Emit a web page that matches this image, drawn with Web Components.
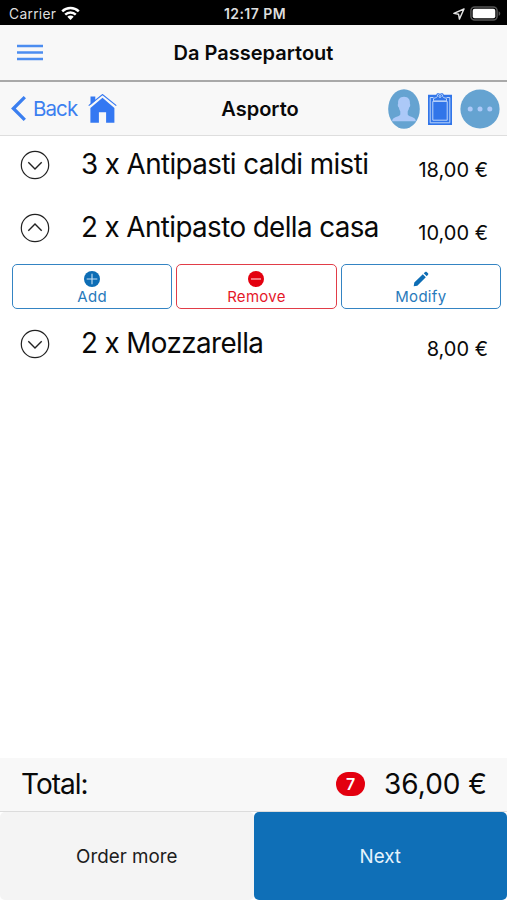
<!DOCTYPE html>
<html lang="en">
<head>
<meta charset="utf-8">
<title>Asporto</title>
<style>
  body {
    margin: 0;
    background: #fff;
    color: #090909;
    font-family: Inter, "Liberation Sans", sans-serif;
  }
</style>
</head>
<body>
<order-app>
  <status-bar slot="top" carrier="Carrier" time="12:17 PM"></status-bar>
  <app-header slot="top">Da Passepartout</app-header>
  <nav-toolbar slot="top" back="Back">Asporto</nav-toolbar>

  <order-row price="18,00 €">3 x Antipasti caldi misti</order-row>
  <order-row price="10,00 €" open>2 x Antipasto della casa</order-row>
  <order-row price="8,00 €">2 x Mozzarella</order-row>

  <order-total slot="bottom" count="7" amount="36,00 €">Total:</order-total>
  <order-footer slot="bottom"></order-footer>
</order-app>

<script>
const baseStyle = `
  :host, * { box-sizing: border-box; }
  svg { display: block; flex: none; }
  span, h1, h2 { white-space: nowrap; margin: 0; }
`

class BaseElement extends HTMLElement {
  connectedCallback() {
    if (this.shadowRoot) return
    const template = document.createElement('template')
    template.innerHTML = `<style>${baseStyle}${this.css()}</style>${this.html()}`
    this.attachShadow({ mode: 'open' }).append(template.content.cloneNode(true))
  }
}

customElements.define('order-app', class extends BaseElement {
  css() {
    return `
      :host { display: flex; flex-direction: column; width: 507px; height: 900px; overflow: hidden; }
      main { flex: 1; min-height: 0; }
    `
  }
  html() {
    return `<slot name="top"></slot><main><slot></slot></main><slot name="bottom"></slot>`
  }
})

customElements.define('status-bar', class extends BaseElement {
  css() {
    return `
      :host {
        display: grid;
        grid-template-columns: 1fr auto 1fr;
        align-items: center;
        height: 25px;
        padding: 2px 6px 0 9px;
        background: #000;
        color: #dedede;
        font-size: 13.8px;
        line-height: 20px;
      }
      div { display: flex; align-items: center; gap: 5px; }
      .carrier { letter-spacing: .3px; }
      .time { font-weight: 600; font-size: 14px; letter-spacing: .45px; }
      .right { justify-content: flex-end; gap: 5px; }
    `
  }
  html() {
    return `
      <div>
        <span class="carrier">${this.getAttribute('carrier')}</span>
        <svg width="19" height="15" viewBox="0 0 19 15" fill="none" stroke="#fff" stroke-width="2.5">
          <path d="M1.2 5.3a12 12 0 0 1 16.6 0M4.2 8.7a7.6 7.6 0 0 1 10.6 0"/>
          <path d="M6.3 10.7a4.6 4.6 0 0 1 6.4 0L9.5 14z" fill="#fff" stroke="none"/>
        </svg>
      </div>
      <span class="time">${this.getAttribute('time')}</span>
      <div class="right">
        <svg width="12" height="12" viewBox="0 0 12 12" fill="none" stroke="#e4e4e4" stroke-width="1.4" stroke-linejoin="round">
          <path d="M11 1 .9 5.4l4.7.9.8 4.8z"/>
        </svg>
        <svg width="31" height="15" viewBox="0 0 31 15">
          <rect x=".9" y=".9" width="26.2" height="13.2" rx="3.8" fill="#000" stroke="#555" stroke-width="1.5"/>
          <rect x="2.7" y="2.7" width="22.6" height="9.6" rx="2" fill="#fff"/>
          <path d="M28.6 5.2c2.2.8 2.2 3.8 0 4.6z" fill="#555"/>
        </svg>
      </div>
    `
  }
})

customElements.define('app-header', class extends BaseElement {
  css() {
    return `
      :host {
        display: grid;
        grid-template-columns: 1fr auto 1fr;
        align-items: center;
        height: 57px;
        padding: 0 17px;
        background: #f8f8f8;
        border-bottom: 2px solid #a9a9a9;
      }
      h1 { font-size: 20px; font-weight: 600; line-height: 28px; }
    `
  }
  html() {
    return `
      <svg width="26" height="17" viewBox="0 0 26 17" stroke="#4c8df0" stroke-width="2.3">
        <path d="M0 2h26M0 8.5h26M0 15h26"/>
      </svg>
      <h1><slot></slot></h1>
    `
  }
})

customElements.define('nav-toolbar', class extends BaseElement {
  css() {
    return `
      :host {
        display: grid;
        grid-template-columns: 1fr auto 1fr;
        align-items: center;
        height: 54px;
        padding: 0 7px 0 11px;
        background: #f8f8f8;
        border-bottom: 1px solid #dedede;
      }
      div { display: flex; align-items: center; }
      .back { color: #3b7ff0; font-size: 20.5px; line-height: 28px; letter-spacing: -.9px; margin: 0 11px 0 7px; }
      h2 { padding-left: 9px; font-size: 20px; font-weight: 600; line-height: 28px; }
      .right { justify-content: flex-end; gap: 8px; }
    `
  }
  html() {
    return `
      <div>
        <svg width="15" height="25" viewBox="0 0 15 25" fill="none" stroke="#3b7ff0" stroke-width="3.3">
          <path d="M13.8 1.2 2.4 12.5l11.4 11.3"/>
        </svg>
        <span class="back">${this.getAttribute('back')}</span>
        <svg width="29" height="29" viewBox="0 0 29 29" fill="#3478f2">
          <path d="M2.5 2.5h4.8v4.2L2.5 11z"/>
          <path d="M14.5 3.7 2.4 14.1v14.6h8.5V18.3h7.2v10.4h8.3V14.1z"/>
          <path d="m.7 11.6 13.8-11 13.8 11" fill="none" stroke="#3478f2" stroke-width="1.2"/>
        </svg>
      </div>
      <h2><slot></slot></h2>
      <div class="right">
        <svg width="32" height="40" viewBox="0 0 32 40">
          <ellipse cx="16" cy="20" rx="15.8" ry="19.7" fill="#65a3d1"/>
          <path d="M16 7.8c4.2 0 6.2 2.9 5.9 6.5-.1 1 .5 1 .3 2.2-.2 1.3-.7 1.8-1.1 2.1-.3 1.7-.8 2.9-1.4 3.8v3.2c.7 2.3 8.2 2.2 8.2 6.7H4.1c0-4.5 7.5-4.4 8.2-6.7v-3.2c-.6-.9-1.1-2.1-1.4-3.8-.4-.3-.9-.8-1.1-2.1-.2-1.2.4-1.2.3-2.2-.3-3.6 1.7-6.5 5.9-6.5z" fill="#acc9f8"/>
        </svg>
        <svg width="24" height="32" viewBox="0 0 24 32">
          <path d="M0 1.8h8.2C8.6.4 10 .1 12 .1s3.4.3 3.8 1.7H24V32H0z" fill="#3175e9"/>
          <g fill="none" stroke="#bdd5fa" stroke-width="1">
            <path d="M5.5 4.5H2.2v25.3h19.6V4.5h-3.3"/>
            <path d="M4.8 8.4h14.4v18.8H4.8z"/>
            <path d="M5.5 7.9V5.7c0-.8 3.4-.6 3.8-2.2C9.6 1.2 10.5.7 12 .7s2.4.5 2.7 2.8c.4 1.6 3.8 1.4 3.8 2.2v2.2z" fill="#3175e9"/>
            <circle cx="12" cy="3.5" r="1"/>
          </g>
        </svg>
        <svg width="40" height="40" viewBox="0 0 40 40">
          <circle cx="20" cy="20" r="19.6" fill="#65a3d1"/>
          <g fill="#acc9f8"><circle cx="10.2" cy="20" r="2.5"/><circle cx="20" cy="20" r="2.5"/><circle cx="29.8" cy="20" r="2.5"/></g>
        </svg>
      </div>
    `
  }
})

customElements.define('order-row', class extends BaseElement {
  css() {
    return `
      :host { display: block; }
      .row { display: flex; align-items: flex-start; height: 63px; padding: 14px 19px 0 20px; }
      .name { flex: 1; margin: -3px 0 0 31px; font-size: 27.8px; line-height: 34px; letter-spacing: -.6px; }
      .price { margin-top: 5px; font-size: 20px; line-height: 30px; }
      .actions { display: flex; gap: 4px; padding: 2px 6px 6px 12px; }
    `
  }
  html() {
    const open = this.hasAttribute('open')
    return `
      <div class="row">
        <svg width="30" height="30" viewBox="0 0 30 30" fill="none" stroke="#222" stroke-width="1.2">
          <circle cx="15" cy="15" r="13.7"/>
          <path d="${open ? 'M8.3 17.7 15 11l6.7 6.7' : 'M8.3 12.3 15 19l6.7-6.7'}" stroke-width="1.4"/>
        </svg>
        <span class="name"><slot></slot></span>
        <span class="price">${this.getAttribute('price')}</span>
      </div>
      ${open ? `
        <div class="actions">
          <action-button icon="add">Add</action-button>
          <action-button icon="remove">Remove</action-button>
          <action-button icon="modify">Modify</action-button>
        </div>` : ''}
    `
  }
})

const actionIcons = {
  add: '<circle cx="8" cy="8" r="8" fill="currentColor"/><path d="M2.7 8h10.6M8 2.7v10.6" stroke="#c9e2f5" stroke-width="1.1"/>',
  remove: '<circle cx="8" cy="8" r="8" fill="currentColor"/><path d="M3 8h10" stroke="#ffc4c7" stroke-width="1.2"/>',
  modify: '<path d="M.7 15.3 1.3 11.6 9.8 3.2l3 3L4.3 14.7zM10.7 2.3l1.5-1.3c.5-.5 1-.5 1.5 0L15 2.3c.5.5.5 1 0 1.5l-1.3 1.5z" fill="currentColor"/>'
}

customElements.define('action-button', class extends BaseElement {
  css() {
    return `
      :host { flex: 1; display: block; --tone: #0d6db5; --line: #3484c3; }
      :host([icon="remove"]) { --tone: #e3000f; --line: #e13d48; }
      button {
        display: flex;
        flex-direction: column;
        align-items: center;
        width: 100%;
        height: 45px;
        padding: 6px 0 0;
        background: #fff;
        border: 1.5px solid var(--line);
        border-radius: 5px;
        color: var(--tone);
        font: 15px/18px Inter, "Liberation Sans", sans-serif;
        letter-spacing: .3px;
      }
      span { margin-top: 1px; opacity: .9; }
    `
  }
  html() {
    return `
      <button>
        <svg width="16" height="16" viewBox="0 0 16 16">${actionIcons[this.getAttribute('icon')]}</svg>
        <span><slot></slot></span>
      </button>
    `
  }
})

customElements.define('order-total', class extends BaseElement {
  css() {
    return `
      :host {
        display: flex;
        align-items: center;
        height: 54px;
        padding: 0 20px 1px 21px;
        background: #f8f8f8;
        border-bottom: 1px solid #dcdcdc;
        font-size: 28px;
        line-height: 36px;
      }
      .label { flex: 1; letter-spacing: -1px; }
      .badge {
        width: 29px;
        height: 24px;
        margin-right: 19px;
        border-radius: 12px;
        background: #e3000f;
        color: #fff;
        font-size: 16px;
        font-weight: 600;
        line-height: 24px;
        text-align: center;
      }
    `
  }
  html() {
    return `
      <span class="label"><slot></slot></span>
      <span class="badge">${this.getAttribute('count')}</span>
      <span class="amount">${this.getAttribute('amount')}</span>
    `
  }
})

customElements.define('order-footer', class extends BaseElement {
  css() {
    return `
      :host { display: flex; height: 88px; }
      button {
        flex: 1;
        border: 0;
        border-radius: 5px;
        padding: 2px 0 0;
        background: #f4f4f4;
        color: #1c1c1c;
        font: 18.8px/26px Inter, "Liberation Sans", sans-serif;
      }
      .next { background: #0f6fb7; color: #e6f3fc; }
    `
  }
  html() {
    return `<button>Order more</button><button class="next">Next</button>`
  }
})
</script>
</body>
</html>
